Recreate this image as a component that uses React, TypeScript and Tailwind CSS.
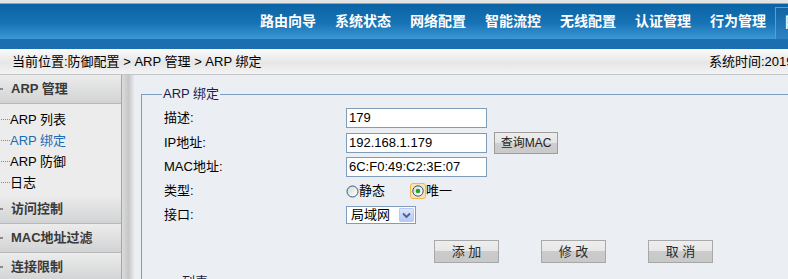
import React from "react";

function RadioOff() {
  return (
    <svg width="13" height="13" viewBox="0 0 13 13">
      <defs>
        <linearGradient id="rgoff" x1="0" y1="0" x2="1" y2="1">
          <stop offset="0" stopColor="#d6d6cf" />
          <stop offset="1" stopColor="#ffffff" />
        </linearGradient>
      </defs>
      <circle cx="6.5" cy="6.5" r="5.5" fill="url(#rgoff)" stroke="#2a5a8a" strokeWidth="1" />
    </svg>
  );
}

function RadioOn() {
  return (
    <span className="w-[16px] h-[16px] rounded-[3px] border border-[#f2b551] bg-[#fbe4b4] flex items-center justify-center">
      <svg width="12" height="12" viewBox="0 0 12 12">
        <defs>
          <linearGradient id="rgon" x1="0" y1="0" x2="1" y2="1">
            <stop offset="0" stopColor="#dcdcd6" />
            <stop offset="1" stopColor="#ffffff" />
          </linearGradient>
        </defs>
        <circle cx="6" cy="6" r="5.2" fill="url(#rgon)" stroke="#2a5a8a" strokeWidth="1" />
        <circle cx="6" cy="6" r="2.3" fill="#2aa22a" />
      </svg>
    </span>
  );
}

function SideHeader({ label }: { label: string }) {
  return (
    <div className="h-[29px] border-b border-[#b8b8b8] bg-[linear-gradient(to_bottom,#ececec,#d2d3d4)] flex items-center">
      <span className="w-[3px] h-[2px] bg-[#8a8a8a]" />
      <span className="ml-[8px] text-[13px] font-bold text-[#3a3a3a]">{label}</span>
    </div>
  );
}

function SideItem({ label, active }: { label: string; active?: boolean }) {
  return (
    <div className="h-[21px] flex items-center">
      <span className="w-[9px] ml-[1px] border-t border-dotted border-[#8a8a8a]" />
      <span className={"text-[13px] " + (active ? "text-[#1a6db5]" : "text-black")}>{label}</span>
    </div>
  );
}

function Row({ label, h, children }: { label: string; h: string; children: React.ReactNode }) {
  return (
    <div className={"flex items-center " + h}>
      <div className="w-[184px] pl-[2px] text-[13px] text-black">{label}</div>
      {children}
    </div>
  );
}

function TextBox({ value }: { value: string }) {
  return (
    <div className="w-[141px] h-[20px] border border-[#7f9db9] bg-white pl-[2px] flex items-center text-[13px] text-black font-['Liberation_Sans',sans-serif]">
      {value}
    </div>
  );
}

function Btn({ label }: { label: string }) {
  return (
    <div className="w-[65px] h-[23px] border border-[#a8a8a8] bg-[linear-gradient(to_bottom,#eeeeee_0%,#e7e7e7_46%,#cbcbcb_46%,#c8c8c8_100%)] flex items-center justify-center text-[13px] text-[#2a2a2a] whitespace-pre">
      {label}
    </div>
  );
}

export default function App() {
  const navItems = ["路由向导", "系统状态", "网络配置", "智能流控", "无线配置", "认证管理", "行为管理"];
  return (
    <div className="w-[788px] h-[279px] overflow-hidden bg-[#ebeff3] font-['Liberation_Sans','Noto_Sans_CJK_SC',sans-serif]">
      <div className="w-[1000px]">
        <div className="h-[4px] bg-[#e4e4e4] border-b border-[#8fa5b8]" />
        <div className="h-[35px] flex items-end pl-[250px] bg-[linear-gradient(to_bottom,#0a63a3,#1773b5_55%,#3b97d6)]">
          {navItems.map((n) => (
            <div key={n} className="w-[75px] h-full pl-[10px] flex items-center text-white font-bold text-[14px] whitespace-nowrap">
              {n}
            </div>
          ))}
          <div className="h-[32px] pl-[9px] pr-[12px] pb-[3px] flex items-center border-l border-t border-[#5c9dd0] bg-[linear-gradient(to_bottom,#1462a2,#2c83c3)] text-white font-bold text-[14px]">
            防御配置
          </div>
        </div>
        <div className="h-[10px] bg-[#1b6fb1]" />
        <div className="h-[26px] border-b border-[#c3c6c9] bg-[linear-gradient(to_bottom,#fbfbfb,#e6e6e6_55%,#f3f3f3)] flex items-center pl-[12px] text-[13px] text-black whitespace-pre">
          <span className="w-[697px] shrink-0">当前位置:防御配置 &gt; ARP 管理 &gt; ARP 绑定</span>
          <span>系统时间:2019-05-21 10:32:18</span>
        </div>
        <div className="flex">
          <div className="w-[122px] shrink-0 border-r border-[#a5a5a5] bg-[#ebebeb]">
            <SideHeader label="ARP 管理" />
            <div className="h-[91px] pt-[5px] bg-[#ececec]">
              <SideItem label="ARP 列表" />
              <SideItem label="ARP 绑定" active />
              <SideItem label="ARP 防御" />
              <SideItem label="日志" />
            </div>
            <SideHeader label="访问控制" />
            <SideHeader label="MAC地址过滤" />
            <SideHeader label="连接限制" />
          </div>
          <div className="w-[12px] shrink-0 bg-[linear-gradient(to_right,#dcdcdc,#c6c6c6_55%,#e6e9ec)]" />
          <div className="flex-1 pl-[7px]">
            <fieldset className="mt-[11px] border border-[#7b9dc2] pl-[20px] pt-[4px] pb-[20px]">
              <legend className="px-[1px] text-[13px] leading-[16px] text-[#1c1c4c]">ARP 绑定</legend>
              <Row label="描述:" h="h-[24px]">
                <TextBox value="179" />
              </Row>
              <Row label="IP地址:" h="h-[25px]">
                <TextBox value="192.168.1.179" />
                <div className="ml-[7px] w-[64px] h-[22px] border border-[#9d9d9d] bg-[linear-gradient(to_bottom,#eeeeee_0%,#e4e4e4_50%,#cfcfcf_50%,#c9c9c9_100%)] flex items-center justify-center text-[12px] text-[#222]">
                  查询MAC
                </div>
              </Row>
              <Row label="MAC地址:" h="h-[24px]">
                <TextBox value="6C:F0:49:C2:3E:07" />
              </Row>
              <Row label="类型:" h="h-[24px]">
                <div className="flex items-center text-[13px] text-black">
                  <RadioOff />
                  <span className="ml-[0px]">静态</span>
                  <span className="ml-[25px]">
                    <RadioOn />
                  </span>
                  <span>唯一</span>
                </div>
              </Row>
              <Row label="接口:" h="h-[24px]">
                <div className="w-[70px] h-[18px] border border-[#7f9db9] bg-white flex items-center">
                  <span className="flex-1 pl-[4px] text-[13px] text-black">局域网</span>
                  <span className="w-[15px] h-[14px] mr-[1px] rounded-[1px] border border-[#b5caf4] bg-[linear-gradient(to_bottom,#dbe6fd,#b4c9f7)] flex items-center justify-center">
                    <svg width="9" height="7" viewBox="0 0 9 7">
                      <path d="M1 1.5 L4.5 5 L8 1.5" fill="none" stroke="#4d6185" strokeWidth="1.8" />
                    </svg>
                  </span>
                </div>
              </Row>
              <div className="mt-[13px] ml-[272px] flex gap-[42px]">
                <Btn label="添 加" />
                <Btn label="修 改" />
                <Btn label="取 消" />
              </div>
              <div className="mt-[11px] pl-[20px] text-[13px] leading-[16px] text-[#1c1c4c]">列表</div>
            </fieldset>
          </div>
        </div>
      </div>
    </div>
  );
}
